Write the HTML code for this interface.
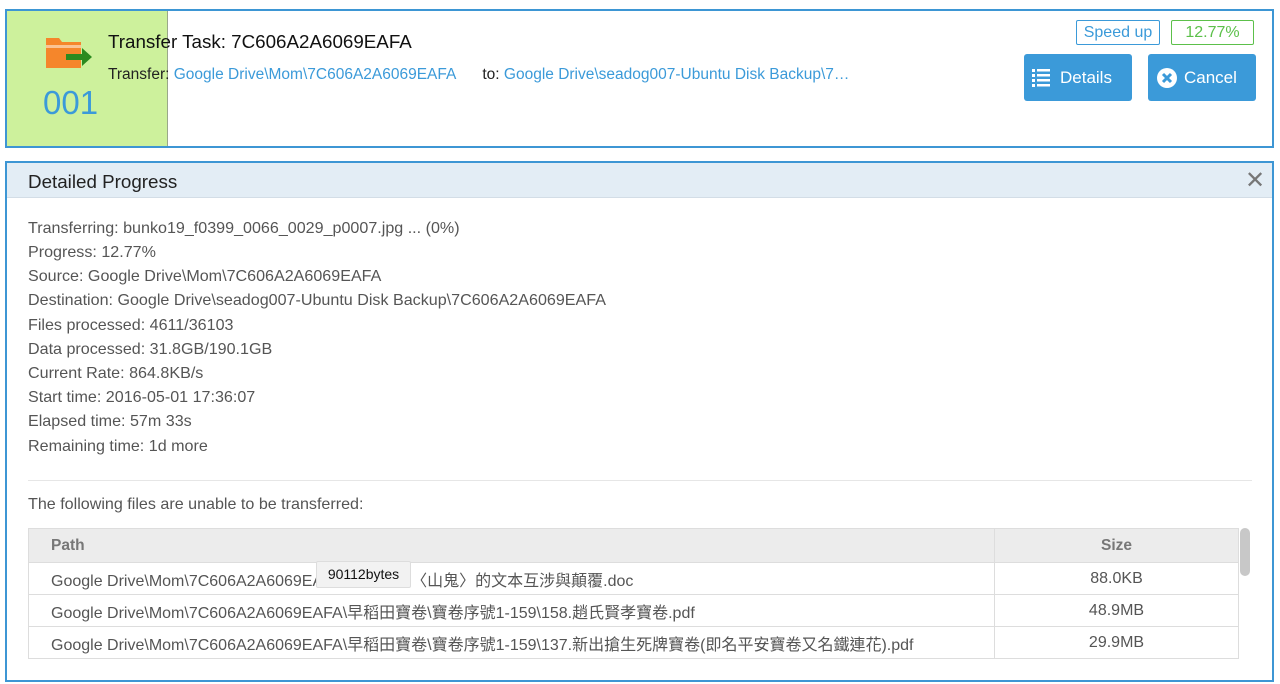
<!DOCTYPE html>
<html><head><meta charset="utf-8"><style>
*{box-sizing:border-box;margin:0;padding:0}
body{width:1280px;height:684px;background:#fff;font-family:"Liberation Sans","Noto Sans CJK TC",sans-serif;position:relative;overflow:hidden;color:#555}
.abs{position:absolute}
.p1{left:5px;top:9px;width:1269px;height:139px;border:2px solid #3d96d4}
.green{left:7px;top:11px;width:161px;height:135px;background:#cdf19c;border-right:1px solid #9aa88a}
.btn{background:#3b9ad9;color:#fff;font-size:16px;border-radius:3px;height:47px;top:54px;line-height:47px}
.p2{left:5px;top:161px;width:1269px;height:521px;border:2px solid #3d96d4}
.hdr{left:7px;top:163px;width:1265px;height:35px;background:#e3edf5;border-bottom:1px solid #d3dde6}
.line{left:28px;font-size:16.1px;color:#555}
table{position:absolute;left:28px;top:528px;width:1211px;border-collapse:collapse;font-size:16px;color:#555}
td,th{border:1px solid #ddd;height:32px;padding:0 22px;text-align:left;white-space:nowrap}
th{background:#ececec;color:#777;font-weight:bold;height:34px;font-size:15.5px}
.c{text-align:center;width:244px}
</style></head><body>
<div class="abs p1"></div>
<div class="abs green"></div>
<svg class="abs" style="left:44px;top:36px" width="56" height="36" viewBox="0 0 56 36">
<path d="M2 2h13l3 4h19v26H2z" fill="#f5862b"/><rect x="2" y="9" width="35" height="3" fill="#fff" opacity=".5"/>
<path d="M22 18h16v-6l10 9-10 9v-6H22z" fill="#2b8a1f"/></svg>
<div class="abs" style="left:43px;top:84px;font-size:33px;color:#3b9ad9">001</div>
<div class="abs" style="left:108px;top:31px;font-size:18.8px;color:#111">Transfer Task: 7C606A2A6069EAFA</div>
<div class="abs" style="left:108px;top:66px;font-size:15.5px;color:#222">Transfer: <span style="color:#3b9ad9">Google Drive\Mom\7C606A2A6069EAFA</span><span style="display:inline-block;width:26px"></span>to: <span style="color:#3b9ad9">Google Drive\seadog007-Ubuntu Disk Backup\7…</span></div>
<div class="abs" style="left:1076px;top:20px;width:84px;height:25px;border:1px solid #3b9ad9;color:#3b9ad9;font-size:16px;text-align:center;line-height:23px;border-radius:2px">Speed up</div>
<div class="abs" style="left:1171px;top:20px;width:83px;height:25px;border:1px solid #5cc04a;color:#5cc04a;font-size:16px;text-align:center;line-height:23px;border-radius:2px">12.77%</div>
<div class="abs btn" style="left:1024px;width:108px"><svg style="position:absolute;left:8px;top:14px" width="20" height="19"><g fill="#fff"><rect x="0" y="1" width="3" height="3"/><rect x="0" y="6" width="3" height="3"/><rect x="0" y="11" width="3" height="3"/><rect x="0" y="16" width="3" height="3"/><rect x="5" y="1" width="13" height="2.5"/><rect x="5" y="6" width="13" height="2.5"/><rect x="5" y="11" width="13" height="2.5"/><rect x="5" y="16" width="13" height="2.5"/></g></svg><span style="position:absolute;left:36px;font-size:17px">Details</span></div>
<div class="abs btn" style="left:1148px;width:108px"><svg style="position:absolute;left:9px;top:14px" width="20" height="20"><circle cx="10" cy="10" r="10" fill="#fff"/><path d="M6 6l8 8M14 6l-8 8" stroke="#3b9ad9" stroke-width="3"/></svg><span style="position:absolute;left:36px;font-size:17px">Cancel</span></div>
<div class="abs p2"></div>
<div class="abs hdr"></div>
<div class="abs" style="left:28px;top:171px;font-size:18.8px;color:#222">Detailed Progress</div>
<div class="abs" style="left:1245px;top:168px;font-size:24px;color:#777;line-height:26px">✕</div>
<div class="abs line" style="top:219px">Transferring: bunko19_f0399_0066_0029_p0007.jpg ... (0%)</div>
<div class="abs line" style="top:243px">Progress: 12.77%</div>
<div class="abs line" style="top:267px">Source: Google Drive\Mom\7C606A2A6069EAFA</div>
<div class="abs line" style="top:291px">Destination: Google Drive\seadog007-Ubuntu Disk Backup\7C606A2A6069EAFA</div>
<div class="abs line" style="top:316px">Files processed: 4611/36103</div>
<div class="abs line" style="top:340px">Data processed: 31.8GB/190.1GB</div>
<div class="abs line" style="top:364px">Current Rate: 864.8KB/s</div>
<div class="abs line" style="top:388px">Start time: 2016-05-01 17:36:07</div>
<div class="abs line" style="top:412px">Elapsed time: 57m 33s</div>
<div class="abs line" style="top:437px">Remaining time: 1d more</div>
<div class="abs" style="left:28px;top:480px;width:1224px;height:1px;background:#e6e6e6"></div>
<div class="abs line" style="top:495px">The following files are unable to be transferred:</div>
<table>
<tr><th>Path</th><th class="c" style="text-align:center">Size</th></tr>
<tr><td>Google Drive\Mom\7C606A2A6069EAFA\論李碧華〈山鬼〉的文本互涉與顛覆.doc</td><td class="c">88.0KB</td></tr>
<tr><td>Google Drive\Mom\7C606A2A6069EAFA\早稻田寶卷\寶卷序號1-159\158.趙氏賢孝寶卷.pdf</td><td class="c">48.9MB</td></tr>
<tr><td>Google Drive\Mom\7C606A2A6069EAFA\早稻田寶卷\寶卷序號1-159\137.新出搶生死牌寶卷(即名平安寶卷又名鐵連花).pdf</td><td class="c">29.9MB</td></tr>
</table>
<div class="abs" style="left:1240px;top:528px;width:10px;height:48px;background:#c8c8c8;border-radius:5px"></div>
<div class="abs" style="left:316px;top:561px;width:95px;height:27px;background:#f2f2f2;border:1px solid #ddd;color:#111;font-size:14px;line-height:25px;text-align:center;border-radius:2px">90112bytes</div>
</body></html>
